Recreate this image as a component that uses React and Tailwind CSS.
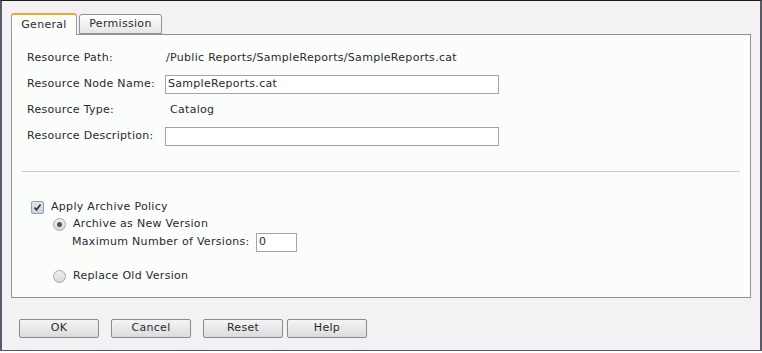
import React from 'react'

const font = { fontFamily: '"DejaVu Sans", Verdana, sans-serif' }

export default function App() {
  return (
    <div className="w-[762px] h-[353px] bg-white text-[11px] tracking-[0.3px] text-[#2a2a2e]" style={font}>
      <div className="h-[351px] bg-[#f3f1f4] border-t border-t-[#1c1c1c] border-l-2 border-l-[#555a66] border-r-2 border-r-[#555a66] border-b border-b-[#555a66] pl-[9px]">
        {/* Tabs */}
        <div className="flex items-end gap-[2px] pt-[11px] h-[33px]">
          <div className="relative z-10 -mb-px h-[22px] w-[66px] flex items-center justify-center bg-[#fbfdfb] border border-[#9a9ea4] border-b-0 border-t-2 border-t-[#f0a530] rounded-t-[3px]">
            General
          </div>
          <div className="h-[20px] w-[83px] flex items-center justify-center bg-gradient-to-b from-white to-[#e6e6e8] border border-[#8e9296] rounded-t-[3px]">
            Permission
          </div>
        </div>

        {/* Panel */}
        <div className="w-[740px] h-[264px] bg-[#fbfdfb] border border-[#8f9397] pt-[13px]">
          <div className="flex flex-col gap-[6px] pl-[15px]">
            <Row label="Resource Path:">
              <span className="pl-px">/Public Reports/SampleReports/SampleReports.cat</span>
            </Row>
            <Row label="Resource Node Name:">
              <Field w="w-[334px]" value="SampleReports.cat" />
            </Row>
            <Row label="Resource Type:">
              <span className="pl-[5px]">Catalog</span>
            </Row>
            <Row label="Resource Description:">
              <Field w="w-[334px]" value="" />
            </Row>
          </div>

          <div className="mt-[25px] mx-[10px] border-t border-[#c9c9c9]" />

          <div className="pl-[19px] pt-[28px]">
            <div className="flex items-center h-[14px]">
              <div className="w-[13px] h-[13px] border border-[#7fa0d8] rounded-[2px] bg-gradient-to-b from-[#e4e4e4] to-[#d2d2d2] flex items-center justify-center">
                <svg width="9" height="9" viewBox="0 0 9 9">
                  <path d="M1.5 4.5 L3.5 6.8 L7.5 1.5" stroke="#3a3a3a" strokeWidth="1.8" fill="none" />
                </svg>
              </div>
              <span className="ml-[7px]">Apply Archive Policy</span>
            </div>

            <div className="pl-[22px] mt-[3px]">
              <div className="flex items-center h-[14px]">
                <Radio checked />
                <span className="ml-[7px]">Archive as New Version</span>
              </div>
              <div className="flex items-center pl-[19px] mt-[2px] h-[19px]">
                <span className="w-[184px]">Maximum Number of Versions:</span>
                <Field w="w-[41px]" value="0" />
              </div>
              <div className="flex items-center h-[14px] mt-[17px]">
                <Radio />
                <span className="ml-[7px]">Replace Old Version</span>
              </div>
            </div>
          </div>
        </div>

        {/* Buttons */}
        <div className="flex pt-[21px] pl-[8px]">
          <Btn>OK</Btn>
          <Btn className="ml-[12px]">Cancel</Btn>
          <Btn className="ml-[12px]">Reset</Btn>
          <Btn className="ml-[4px]">Help</Btn>
        </div>
      </div>
    </div>
  )
}

function Row({ label, children }) {
  return (
    <div className="flex items-center h-[20px]">
      <span className="w-[138px] shrink-0">{label}</span>
      {children}
    </div>
  )
}

function Field({ w, value }) {
  return (
    <div className={`${w} h-[19px] bg-white border border-[#a4a4a4] flex items-center pl-[2px]`}>
      {value}
    </div>
  )
}

function Radio({ checked }) {
  return (
    <div className="w-[13px] h-[13px] rounded-full border border-[#a8a8a8] bg-gradient-to-b from-[#f0f0f0] to-[#d8d8d8] flex items-center justify-center">
      {checked && <div className="w-[5px] h-[5px] rounded-full bg-[#555]" />}
    </div>
  )
}

function Btn({ children, className = '' }) {
  return (
    <div className={`${className} w-[80px] h-[19px] flex items-center justify-center border border-[#8a8a8a] rounded-[2px] bg-gradient-to-b from-[#f4f4f4] to-[#dcdcdc]`}>
      {children}
    </div>
  )
}
